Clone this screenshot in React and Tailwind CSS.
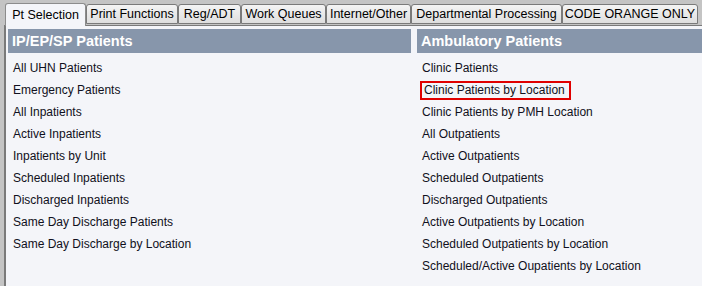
import React from "react";

const tabs = [
  { label: "Pt Selection", w: "w-[81px]", active: true },
  { label: "Print Functions", w: "w-[92px]" },
  { label: "Reg/ADT", w: "w-[63px]" },
  { label: "Work Queues", w: "w-[85px]" },
  { label: "Internet/Other", w: "w-[85px]" },
  { label: "Departmental Processing", w: "w-[151px]" },
  { label: "CODE ORANGE ONLY", w: "w-[136px]" },
];

const inpatients = [
  "All UHN Patients",
  "Emergency Patients",
  "All Inpatients",
  "Active Inpatients",
  "Inpatients by Unit",
  "Scheduled Inpatients",
  "Discharged Inpatients",
  "Same Day Discharge Patients",
  "Same Day Discharge by Location",
];

const ambulatory = [
  "Clinic Patients",
  "Clinic Patients by Location",
  "Clinic Patients by PMH Location",
  "All Outpatients",
  "Active Outpatients",
  "Scheduled Outpatients",
  "Discharged Outpatients",
  "Active Outpatients by Location",
  "Scheduled Outpatients by Location",
  "Scheduled/Active Oupatients by Location",
];

function Column({ title, items, selected, className }) {
  return (
    <div className={className}>
      <div className="h-[24px] bg-[#8796ab] text-white font-bold text-[14.5px] leading-[24px] pl-[4px]">
        {title}
      </div>
      <ul className="pt-[4px]">
        {items.map(item => (
          <li key={item} className="h-[22px] flex items-center">
            <span
              className={
                item === selected
                  ? "ml-[3px] pl-[2px] pr-[4px] h-[19px] leading-[15px] border-2 border-[#e00000]"
                  : "ml-[5px]"
              }
            >
              {item}
            </span>
          </li>
        ))}
      </ul>
    </div>
  );
}

export default function App() {
  return (
    <div
      className="w-[702px] h-[286px] bg-[#c4c4c4] text-[12px] text-[#101020] overflow-hidden"
      style={{ fontFamily: '"Liberation Sans", Arial, sans-serif' }}
    >
      {/* tab strip */}
      <div className="flex items-end h-[25px] pl-[5px]">
        {tabs.map(t => (
          <div
            key={t.label}
            className={
              t.active
                ? `${t.w} h-[23px] -mb-[1px] z-10 bg-[#f4f5f9] border border-b-0 border-[#8c8c8c] rounded-t-[3px] text-[12.5px] text-black whitespace-nowrap flex items-center justify-center`
                : `${t.w} h-[20px] mb-[1px] bg-gradient-to-b from-[#f4f4f4] to-[#dedede] border border-[#7a7a7a] rounded-t-[3px] text-[12.5px] text-black whitespace-nowrap flex items-center justify-center`
            }
          >
            {t.label}
          </div>
        ))}
      </div>

      {/* content panel */}
      <div className="ml-[4px] h-[261px] bg-[#f4f5f9] border-l-2 border-t border-[#7a7a7a] flex pt-[3px] pl-[2px] gap-[6px]">
        <Column title="IP/EP/SP Patients" items={inpatients} className="w-[403px]" />
        <Column
          title="Ambulatory Patients"
          items={ambulatory}
          selected="Clinic Patients by Location"
          className="flex-1"
        />
      </div>
    </div>
  );
}
